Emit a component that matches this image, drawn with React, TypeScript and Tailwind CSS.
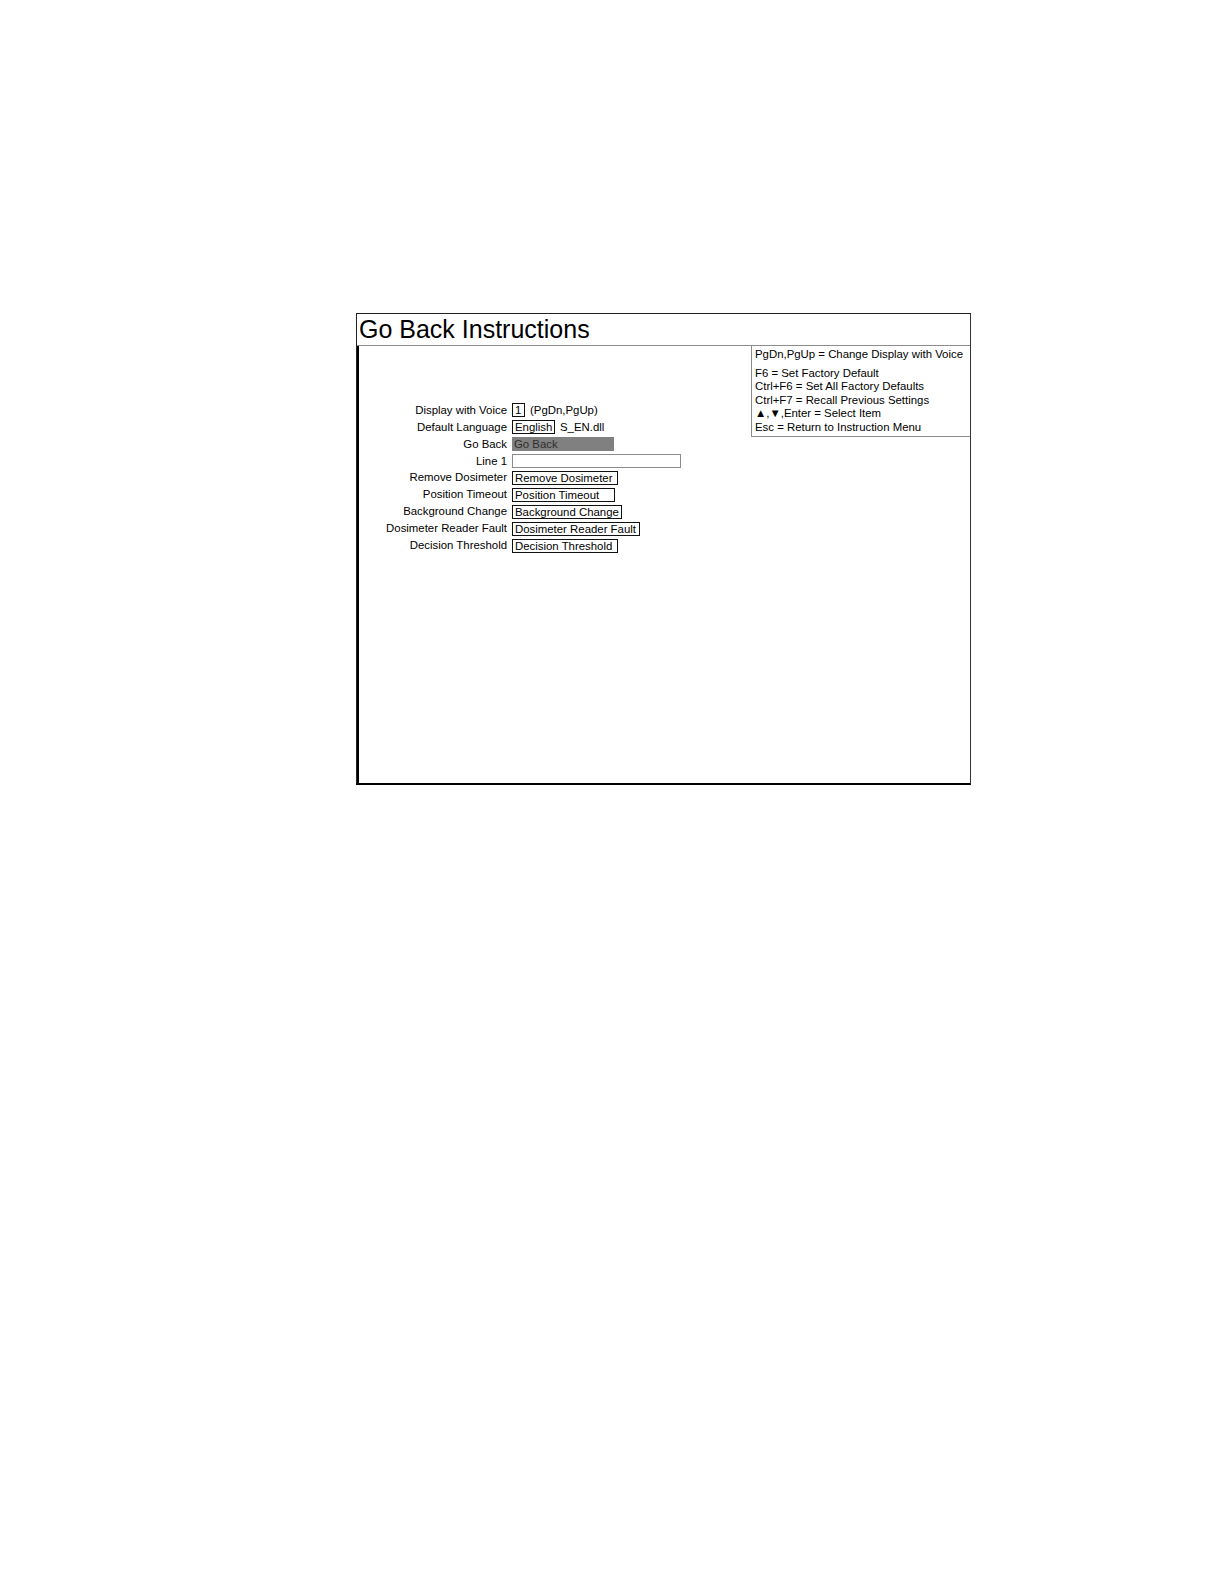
import React from 'react';

const font = { fontFamily: '"Liberation Sans", Arial, sans-serif' };

type Row = { label: string; value?: string; width: string; kind?: 'box' | 'sel' | 'empty'; note?: string };

const rows: Row[] = [
  { label: 'Display with Voice', value: '1', width: 'w-[13px]', note: '(PgDn,PgUp)' },
  { label: 'Default Language', value: 'English', width: 'w-[43px]', note: 'S_EN.dll' },
  { label: 'Go Back', value: 'Go Back', width: 'w-[102px]', kind: 'sel' },
  { label: 'Line 1', width: 'w-[169px]', kind: 'empty' },
  { label: 'Remove Dosimeter', value: 'Remove Dosimeter', width: 'w-[106px]' },
  { label: 'Position Timeout', value: 'Position Timeout', width: 'w-[103px]' },
  { label: 'Background Change', value: 'Background Change', width: 'w-[110px]' },
  { label: 'Dosimeter Reader Fault', value: 'Dosimeter Reader Fault', width: 'w-[128px]' },
  { label: 'Decision Threshold', value: 'Decision Threshold', width: 'w-[106px]' },
];

const help = [
  'F6 = Set Factory Default',
  'Ctrl+F6 = Set All Factory Defaults',
  'Ctrl+F7 = Recall Previous Settings',
  '▲,▼,Enter = Select Item',
  'Esc = Return to Instruction Menu',
];

function Field({ row }: { row: Row }) {
  if (row.kind === 'sel') {
    return (
      <div className={`${row.width} h-[14px] bg-[#808080] text-[#2e2e2e] pl-[2px] leading-[14px] whitespace-nowrap`}>
        {row.value}
      </div>
    );
  }
  if (row.kind === 'empty') {
    return <div className={`${row.width} h-[14px] border border-[#8c8c8c]`} />;
  }
  return (
    <div className={`${row.width} h-[14px] border border-[#111] pl-[2px] leading-[12px] whitespace-nowrap`}>
      {row.value}
    </div>
  );
}

export default function App() {
  return (
    <div className="min-h-[1584px] bg-white pt-[313px] pl-[356px] text-black" style={font}>
      <div className="w-[615px] h-[472px] border-t border-r border-l border-b-2 border-t-[#222] border-r-[#333] border-l-[#222] border-b-black flex flex-col">
        {/* Title */}
        <div className="h-[32px] border-b border-[#8c8c8c] pl-[2px] text-[25px] leading-[31px] whitespace-nowrap">
          Go Back Instructions
        </div>

        {/* Body */}
        <div className="flex-1 flex border-l-2 border-black">
          <div className="flex-1 pt-[56px] text-[11.4px]">
            {rows.map((row) => (
              <div key={row.label} className="h-[16.9px] flex items-center">
                <div className="w-[148px] text-right whitespace-nowrap">{row.label}</div>
                <div className="ml-[5px]">
                  <Field row={row} />
                </div>
                {row.note && <div className="ml-[5px] whitespace-nowrap">{row.note}</div>}
              </div>
            ))}
          </div>

          <div className="w-[219px] self-start border-l border-b border-[#8c8c8c] pl-[3px] pt-[2px] pb-[2px] text-[11.4px] leading-[13.4px] whitespace-nowrap">
            <div>PgDn,PgUp = Change Display with Voice</div>
            <div className="mt-[5.6px]">
              {help.map((h) => (
                <div key={h}>{h}</div>
              ))}
            </div>
          </div>
        </div>
      </div>
    </div>
  );
}
